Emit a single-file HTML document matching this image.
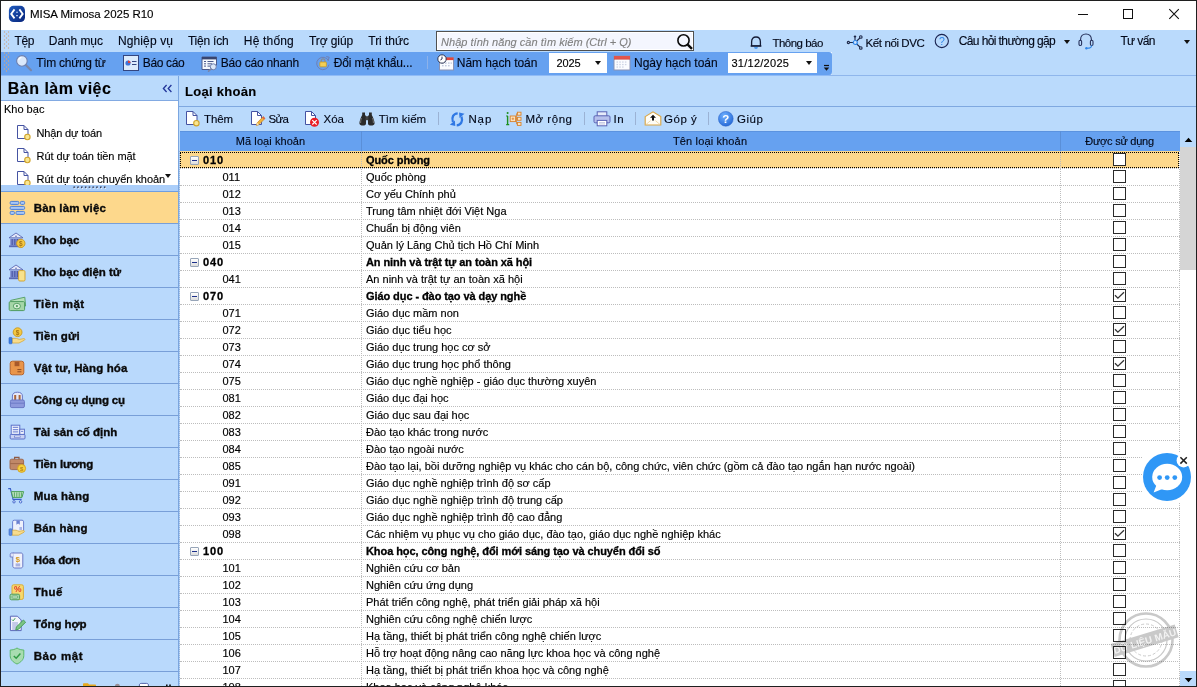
<!DOCTYPE html>
<html lang="vi">
<head>
<meta charset="utf-8">
<title>MISA Mimosa 2025 R10</title>
<style>
*{box-sizing:border-box;margin:0;padding:0}
html,body{width:1197px;height:687px;overflow:hidden;background:#fff}
body{font-family:"Liberation Sans",sans-serif;font-size:11px;color:#000;position:relative}
#win{position:absolute;left:0;top:0;width:1197px;height:687px;overflow:hidden;background:#fff}
#win>div,#win>span,#win>svg{position:absolute}
.t{white-space:nowrap;line-height:1;z-index:5;-webkit-text-stroke:0.13px currentColor}
.bd{background:#1f1f1f;z-index:50}
/* bars */
#menu{left:1px;top:30px;width:1195px;height:22px;background:#badafc}
#search{left:436px;top:31px;width:258px;height:20px;background:#f4f6fe;border:1px solid #505050;box-shadow:inset 1px 1px 0 #fff,inset -1px -1px 0 #fff}
#tb{left:1px;top:52px;width:831px;height:24px;background:#66a1f0;border-bottom:1px solid #90bbf6;border-radius:0 3px 4px 0}
#tbr{left:832px;top:52px;width:364px;height:24px;background:#badafc;z-index:-0}
.combo{top:53px;height:20px;background:#fff}
.sep{width:1px;background:#8fb2e0}
/* left panel */
#left{left:1px;top:76px;width:178px;height:610px;background:#badafc}
#lw{left:1px;top:100px;width:177px;height:85px;background:#fff;border-top:1px solid #82aae2}
#split{left:1px;top:185px;width:177px;height:6px;background:#abcef9;z-index:6}
.nav{left:1px;width:177px;height:32px;background:#b9d9fc;border-top:1px solid #789fd8}
.nav.on{background:#fdd88c;border-top:1px solid #6f9ee0}
#lsep{left:178px;top:76px;width:2px;height:610px;background:#badafc;border-left:1px solid #7ba6e0}
/* right panel */
#right{left:180px;top:76px;width:1016px;height:610px;background:#badafc}
#gline{left:179px;top:106px;width:1017px;height:1px;background:#7fa8e0}
#tline{left:1px;top:75px;width:1195px;height:1px;background:#8fb6ec}
#grid{left:180px;top:131px;width:1000px;height:555px;background:#fff}
#gh{left:180px;top:131px;width:1000px;height:20px;background:#66a1f0;border-top:1px solid #5b93e0}
.hsep{top:131px;width:1px;height:20px;background:#5a8fd8}
.r{left:180px;width:1000px;height:17px;border-bottom:1px dotted #bdbdbd;font-size:11px;white-space:nowrap;line-height:1}
.r{-webkit-text-stroke:0.15px #000}
.r.p{font-weight:bold;letter-spacing:-0.08px;-webkit-text-stroke:0.3px #000}
.r.sel{background:#fdd88c;background-clip:padding-box;height:18px;border-bottom:1px dotted #bdbdbd;width:999px}
.r.sel:after{content:"";position:absolute;box-sizing:border-box;left:0;top:1px;width:999px;height:16px;border:1px dotted #000}
.r span,.r i,.r b{position:absolute}
.r .c1{left:42.5px;top:3px}
.r.p .c1{left:23px;letter-spacing:0.9px}
.r .c2{left:186px;top:3px}
.r.sel .c1,.r.sel .c2{top:4px}
.r .ex{left:10px;top:4px;width:9px;height:9px;border:1px solid #97a5b8;background:linear-gradient(#fff,#dcdcdc);border-radius:1px}
.r.sel .ex{top:5px}
.r .ex:after{content:"";position:absolute;left:1px;top:3px;width:5px;height:1px;background:#1c2f8a}
.ck{left:933px;top:1px;width:13px;height:13px;border:1px solid #2a2a2a;background:#fff}
.r.sel .ck{top:2px}
.ck svg{position:absolute;left:0;top:0}
.vl{top:151px;width:0;height:535px;border-left:1px dotted #bdbdbd;z-index:3}
/* scrollbar */
#sb{left:1180px;top:131px;width:16px;height:555px;background:#fff}
#sbu{left:1180px;top:131px;width:16px;height:16px;background:#badafc}
#sbt{left:1180px;top:147px;width:16px;height:123px;background:#d5d5d5}
#sbd{left:1180px;top:671px;width:16px;height:15px;background:#badafc}
.arr{width:0;height:0;border-left:4px solid transparent;border-right:4px solid transparent}
</style>
</head>
<body>
<div id="win">
<div id="menu"></div>
<div id="tbr"></div>
<div id="tline"></div>
<div id="tb"></div>
<div id="search"></div>
<div class="combo" style="left:549px;width:58px"></div>
<div class="combo" style="left:728px;width:89px"></div>
<div id="left"></div>
<div id="lw"></div>
<div id="split"></div>
<div class="nav on" style="top:191px"></div>
<div class="nav" style="top:223px"></div>
<div class="nav" style="top:255px"></div>
<div class="nav" style="top:287px"></div>
<div class="nav" style="top:319px"></div>
<div class="nav" style="top:351px"></div>
<div class="nav" style="top:383px"></div>
<div class="nav" style="top:415px"></div>
<div class="nav" style="top:447px"></div>
<div class="nav" style="top:479px"></div>
<div class="nav" style="top:511px"></div>
<div class="nav" style="top:543px"></div>
<div class="nav" style="top:575px"></div>
<div class="nav" style="top:607px"></div>
<div class="nav" style="top:639px"></div>
<div style="left:1px;top:671px;width:177px;height:1px;background:#789fd8"></div>
<div id="right"></div>
<div id="lsep"></div>
<div id="gline"></div>
<div id="grid"></div>
<div id="gh"></div>
<div class="hsep" style="left:361px"></div>
<div class="hsep" style="left:1060px"></div>
<div class="r p sel" style="top:151px"><i class="ex"></i><span class="c1">010</span><span class="c2">Quốc phòng</span><b class="ck"></b></div>
<div class="r" style="top:169px"><span class="c1">011</span><span class="c2">Quốc phòng</span><b class="ck"></b></div>
<div class="r" style="top:186px"><span class="c1">012</span><span class="c2">Cơ yếu Chính phủ</span><b class="ck"></b></div>
<div class="r" style="top:203px"><span class="c1">013</span><span class="c2">Trung tâm nhiệt đới Việt Nga</span><b class="ck"></b></div>
<div class="r" style="top:220px"><span class="c1">014</span><span class="c2">Chuẩn bị động viên</span><b class="ck"></b></div>
<div class="r" style="top:237px"><span class="c1">015</span><span class="c2">Quản lý Lăng Chủ tịch Hồ Chí Minh</span><b class="ck"></b></div>
<div class="r p" style="top:254px"><i class="ex"></i><span class="c1">040</span><span class="c2">An ninh và trật tự an toàn xã hội</span><b class="ck"></b></div>
<div class="r" style="top:271px"><span class="c1">041</span><span class="c2">An ninh và trật tự an toàn xã hội</span><b class="ck"></b></div>
<div class="r p" style="top:288px"><i class="ex"></i><span class="c1">070</span><span class="c2">Giáo dục - đào tạo và dạy nghề</span><b class="ck"><svg viewBox="0 0 11 11" width="11" height="11"><path d="M1 5.3 L3.9 8.2 L10 2.3" fill="none" stroke="#333" stroke-width="1.3"/></svg></b></div>
<div class="r" style="top:305px"><span class="c1">071</span><span class="c2">Giáo dục mầm non</span><b class="ck"></b></div>
<div class="r" style="top:322px"><span class="c1">072</span><span class="c2">Giáo dục tiểu học</span><b class="ck"><svg viewBox="0 0 11 11" width="11" height="11"><path d="M1 5.3 L3.9 8.2 L10 2.3" fill="none" stroke="#333" stroke-width="1.3"/></svg></b></div>
<div class="r" style="top:339px"><span class="c1">073</span><span class="c2">Giáo dục trung học cơ sở</span><b class="ck"></b></div>
<div class="r" style="top:356px"><span class="c1">074</span><span class="c2">Giáo dục trung học phổ thông</span><b class="ck"><svg viewBox="0 0 11 11" width="11" height="11"><path d="M1 5.3 L3.9 8.2 L10 2.3" fill="none" stroke="#333" stroke-width="1.3"/></svg></b></div>
<div class="r" style="top:373px"><span class="c1">075</span><span class="c2">Giáo dục nghề nghiệp - giáo dục thường xuyên</span><b class="ck"></b></div>
<div class="r" style="top:390px"><span class="c1">081</span><span class="c2">Giáo dục đại học</span><b class="ck"></b></div>
<div class="r" style="top:407px"><span class="c1">082</span><span class="c2">Giáo dục sau đại học</span><b class="ck"></b></div>
<div class="r" style="top:424px"><span class="c1">083</span><span class="c2">Đào tạo khác trong nước</span><b class="ck"></b></div>
<div class="r" style="top:441px"><span class="c1">084</span><span class="c2">Đào tạo ngoài nước</span><b class="ck"></b></div>
<div class="r" style="top:458px"><span class="c1">085</span><span class="c2">Đào tạo lại, bồi dưỡng nghiệp vụ khác cho cán bộ, công chức, viên chức (gồm cả đào tạo ngắn hạn nước ngoài)</span><b class="ck"></b></div>
<div class="r" style="top:475px"><span class="c1">091</span><span class="c2">Giáo dục nghề nghiệp trình độ sơ cấp</span><b class="ck"></b></div>
<div class="r" style="top:492px"><span class="c1">092</span><span class="c2">Giáo dục nghề nghiệp trình độ trung cấp</span><b class="ck"></b></div>
<div class="r" style="top:509px"><span class="c1">093</span><span class="c2">Giáo dục nghề nghiệp trình độ cao đẳng</span><b class="ck"></b></div>
<div class="r" style="top:526px"><span class="c1">098</span><span class="c2">Các nhiệm vụ phục vụ cho giáo dục, đào tạo, giáo dục nghề nghiệp khác</span><b class="ck"><svg viewBox="0 0 11 11" width="11" height="11"><path d="M1 5.3 L3.9 8.2 L10 2.3" fill="none" stroke="#333" stroke-width="1.3"/></svg></b></div>
<div class="r p" style="top:543px"><i class="ex"></i><span class="c1">100</span><span class="c2">Khoa học, công nghệ, đổi mới sáng tạo và chuyển đổi số</span><b class="ck"></b></div>
<div class="r" style="top:560px"><span class="c1">101</span><span class="c2">Nghiên cứu cơ bản</span><b class="ck"></b></div>
<div class="r" style="top:577px"><span class="c1">102</span><span class="c2">Nghiên cứu ứng dụng</span><b class="ck"></b></div>
<div class="r" style="top:594px"><span class="c1">103</span><span class="c2">Phát triển công nghệ, phát triển giải pháp xã hội</span><b class="ck"></b></div>
<div class="r" style="top:611px"><span class="c1">104</span><span class="c2">Nghiên cứu công nghệ chiến lược</span><b class="ck"></b></div>
<div class="r" style="top:628px"><span class="c1">105</span><span class="c2">Hạ tầng, thiết bị phát triển công nghệ chiến lược</span><b class="ck"></b></div>
<div class="r" style="top:645px"><span class="c1">106</span><span class="c2">Hỗ trợ hoạt động nâng cao năng lực khoa học và công nghệ</span><b class="ck"></b></div>
<div class="r" style="top:662px"><span class="c1">107</span><span class="c2">Hạ tầng, thiết bị phát triển khoa học và công nghệ</span><b class="ck"></b></div>
<div class="r" style="top:679px"><span class="c1">108</span><span class="c2">Khoa học và công nghệ khác</span><b class="ck"></b></div>
<div class="vl" style="left:361px"></div>
<div class="vl" style="left:1060px"></div>
<div class="vl" style="left:1179px"></div>
<div class="vl" style="left:179px;border-left-color:#9db4d6"></div>
<div id="sb"></div><div id="sbu"></div><div id="sbt"></div><div id="sbd"></div>
<svg style="left:1184px;top:137px" width="9" height="6" viewBox="0 0 9 6"><path d="M0.7 5 L4.5 0.7 L8.3 5 Z" fill="#000"/></svg>
<svg style="left:1184px;top:677px" width="9" height="6" viewBox="0 0 9 6"><path d="M0.7 1 L4.5 5.3 L8.3 1 Z" fill="#000"/></svg>
<span class="t" style="left:30.0px;top:9px;font-size:11.5px;letter-spacing:-0.027px;color:#000">MISA Mimosa 2025 R10</span>
<span class="t" style="left:14.4px;top:35px;font-size:12px;letter-spacing:-0.344px;color:#020818">Tệp</span>
<span class="t" style="left:48.8px;top:35px;font-size:12px;letter-spacing:-0.086px;color:#020818">Danh mục</span>
<span class="t" style="left:117.9px;top:35px;font-size:12px;letter-spacing:0.132px;color:#020818">Nghiệp vụ</span>
<span class="t" style="left:187.9px;top:35px;font-size:12px;letter-spacing:-0.221px;color:#020818">Tiện ích</span>
<span class="t" style="left:243.8px;top:35px;font-size:12px;letter-spacing:0.185px;color:#020818">Hệ thống</span>
<span class="t" style="left:308.9px;top:35px;font-size:12px;letter-spacing:-0.069px;color:#020818">Trợ giúp</span>
<span class="t" style="left:368.3px;top:35px;font-size:12px;letter-spacing:-0.046px;color:#020818">Tri thức</span>
<span class="t" style="left:441.0px;top:37px;font-size:11px;letter-spacing:0.035px;color:#808080;font-style:italic">Nhập tính năng cần tìm kiếm (Ctrl + Q)</span>
<span class="t" style="left:772.5px;top:38px;font-size:11.5px;letter-spacing:-0.525px;color:#020818">Thông báo</span>
<span class="t" style="left:865.6px;top:38px;font-size:11.5px;letter-spacing:-0.408px;color:#020818">Kết nối DVC</span>
<span class="t" style="left:958.7px;top:35px;font-size:12px;letter-spacing:-0.600px;color:#020818">Câu hỏi thường gặp</span>
<span class="t" style="left:1120.4px;top:35px;font-size:12px;letter-spacing:-0.600px;color:#020818">Tư vấn</span>
<span class="t" style="left:36.2px;top:57px;font-size:12px;letter-spacing:-0.277px;color:#020818">Tìm chứng từ</span>
<span class="t" style="left:142.8px;top:57px;font-size:12px;letter-spacing:-0.341px;color:#020818">Báo cáo</span>
<span class="t" style="left:220.7px;top:57px;font-size:12px;letter-spacing:-0.179px;color:#020818">Báo cáo nhanh</span>
<span class="t" style="left:333.7px;top:57px;font-size:12px;letter-spacing:-0.129px;color:#020818">Đổi mật khẩu...</span>
<span class="t" style="left:456.8px;top:57px;font-size:12px;letter-spacing:-0.066px;color:#020818">Năm hạch toán</span>
<span class="t" style="left:556.4px;top:58px;font-size:11px;letter-spacing:-0.095px;color:#000">2025</span>
<span class="t" style="left:634.0px;top:57px;font-size:12px;letter-spacing:-0.036px;color:#020818">Ngày hạch toán</span>
<span class="t" style="left:731.4px;top:58px;font-size:11px;letter-spacing:0.271px;color:#000">31/12/2025</span>
<span class="t" style="left:7.8px;top:81px;font-size:16px;letter-spacing:0.479px;color:#000;font-weight:bold">Bàn làm việc</span>
<span class="t" style="left:3.9px;top:104px;font-size:11px;letter-spacing:0.021px;color:#000">Kho bạc</span>
<span class="t" style="left:36.5px;top:128px;font-size:11px;letter-spacing:-0.147px;color:#000">Nhận dự toán</span>
<span class="t" style="left:36.5px;top:151px;font-size:11px;letter-spacing:-0.064px;color:#000">Rút dự toán tiền mặt</span>
<span class="t" style="left:36.5px;top:174px;font-size:11px;letter-spacing:-0.043px;color:#000">Rút dự toán chuyển khoản</span>
<span class="t" style="left:184.9px;top:85px;font-size:13px;letter-spacing:0.308px;color:#000;font-weight:bold">Loại khoản</span>
<span class="t" style="left:204.0px;top:114px;font-size:11.5px;letter-spacing:-0.069px;color:#020818">Thêm</span>
<span class="t" style="left:268.4px;top:114px;font-size:11.5px;letter-spacing:-0.600px;color:#020818">Sửa</span>
<span class="t" style="left:323.4px;top:114px;font-size:11.5px;letter-spacing:0.066px;color:#020818">Xóa</span>
<span class="t" style="left:378.7px;top:114px;font-size:11.5px;letter-spacing:0.031px;color:#020818">Tìm kiếm</span>
<span class="t" style="left:468.4px;top:114px;font-size:11.5px;letter-spacing:0.900px;color:#020818">Nạp</span>
<span class="t" style="left:525.4px;top:114px;font-size:11.5px;letter-spacing:0.543px;color:#020818">Mở rộng</span>
<span class="t" style="left:613.4px;top:114px;font-size:11.5px;letter-spacing:0.606px;color:#020818">In</span>
<span class="t" style="left:664.0px;top:114px;font-size:11.5px;letter-spacing:0.528px;color:#020818">Góp ý</span>
<span class="t" style="left:737.1px;top:114px;font-size:11.5px;letter-spacing:0.501px;color:#020818">Giúp</span>
<span class="t" style="left:235.8px;top:136px;font-size:11px;letter-spacing:0.075px;color:#020818">Mã loại khoản</span>
<span class="t" style="left:673.0px;top:136px;font-size:11px;letter-spacing:0.141px;color:#020818">Tên loại khoản</span>
<span class="t" style="left:1085.3px;top:136px;font-size:11px;letter-spacing:-0.243px;color:#020818">Được sử dụng</span>
<span class="t" style="left:33.7px;top:203px;font-size:11.5px;letter-spacing:0.170px;color:#0a0a0a;font-weight:bold;-webkit-text-stroke:0.35px #0a0a0a">Bàn làm việc</span>
<span class="t" style="left:33.7px;top:235px;font-size:11.5px;letter-spacing:0.071px;color:#0a0a0a;font-weight:bold;-webkit-text-stroke:0.35px #0a0a0a">Kho bạc</span>
<span class="t" style="left:33.7px;top:267px;font-size:11.5px;letter-spacing:-0.004px;color:#0a0a0a;font-weight:bold;-webkit-text-stroke:0.35px #0a0a0a">Kho bạc điện tử</span>
<span class="t" style="left:33.7px;top:299px;font-size:11.5px;letter-spacing:0.489px;color:#0a0a0a;font-weight:bold;-webkit-text-stroke:0.35px #0a0a0a">Tiền mặt</span>
<span class="t" style="left:33.7px;top:331px;font-size:11.5px;letter-spacing:0.102px;color:#0a0a0a;font-weight:bold;-webkit-text-stroke:0.35px #0a0a0a">Tiền gửi</span>
<span class="t" style="left:33.7px;top:363px;font-size:11.5px;letter-spacing:0.105px;color:#0a0a0a;font-weight:bold;-webkit-text-stroke:0.35px #0a0a0a">Vật tư, Hàng hóa</span>
<span class="t" style="left:33.7px;top:395px;font-size:11.5px;letter-spacing:-0.186px;color:#0a0a0a;font-weight:bold;-webkit-text-stroke:0.35px #0a0a0a">Công cụ dụng cụ</span>
<span class="t" style="left:33.7px;top:427px;font-size:11.5px;letter-spacing:-0.008px;color:#0a0a0a;font-weight:bold;-webkit-text-stroke:0.35px #0a0a0a">Tài sản cố định</span>
<span class="t" style="left:33.7px;top:459px;font-size:11.5px;letter-spacing:-0.086px;color:#0a0a0a;font-weight:bold;-webkit-text-stroke:0.35px #0a0a0a">Tiền lương</span>
<span class="t" style="left:33.7px;top:491px;font-size:11.5px;letter-spacing:0.275px;color:#0a0a0a;font-weight:bold;-webkit-text-stroke:0.35px #0a0a0a">Mua hàng</span>
<span class="t" style="left:33.7px;top:523px;font-size:11.5px;letter-spacing:0.216px;color:#0a0a0a;font-weight:bold;-webkit-text-stroke:0.35px #0a0a0a">Bán hàng</span>
<span class="t" style="left:33.7px;top:555px;font-size:11.5px;letter-spacing:-0.109px;color:#0a0a0a;font-weight:bold;-webkit-text-stroke:0.35px #0a0a0a">Hóa đơn</span>
<span class="t" style="left:33.7px;top:587px;font-size:11.5px;letter-spacing:0.405px;color:#0a0a0a;font-weight:bold;-webkit-text-stroke:0.35px #0a0a0a">Thuế</span>
<span class="t" style="left:33.7px;top:619px;font-size:11.5px;letter-spacing:-0.090px;color:#0a0a0a;font-weight:bold;-webkit-text-stroke:0.35px #0a0a0a">Tổng hợp</span>
<span class="t" style="left:33.7px;top:651px;font-size:11.5px;letter-spacing:0.588px;color:#0a0a0a;font-weight:bold;-webkit-text-stroke:0.35px #0a0a0a">Bảo mật</span>
<!-- title icon -->
<svg style="left:8px;top:5px" width="18" height="18" viewBox="0 0 18 18"><defs><linearGradient id="tg" x1="0" y1="0" x2="1" y2="1"><stop offset="0" stop-color="#1f5cc0"/><stop offset="1" stop-color="#08247a"/></linearGradient></defs><rect x="0.9" y="0.8" width="16.1" height="16.3" rx="4.6" fill="url(#tg)"/><path d="M6.5 4.4 L3.2 8.9 L6.5 13.4 M11.4 4.4 L14.7 8.9 L11.4 13.4" fill="none" stroke="#fff" stroke-width="1.8" stroke-linejoin="miter"/><path d="M8.2 7.3 H9.8 M8.2 10.6 H9.8" stroke="#cfe0ff" stroke-width="1.1"/></svg>
<!-- window controls -->
<svg style="left:1070px;top:4px" width="120" height="22" viewBox="0 0 120 22"><path d="M8 10.5 H18" stroke="#111" stroke-width="1"/><rect x="53.5" y="5.5" width="9" height="9" fill="none" stroke="#111" stroke-width="1"/><path d="M99.3 5.2 L108.8 14.8 M108.8 5.2 L99.3 14.8" stroke="#111" stroke-width="1.1"/></svg>
<!-- grips -->
<svg style="left:3px;top:30px" width="8" height="42" viewBox="0 0 8 42"><g fill="#c9a98c"><circle cx="1.5" cy="2" r=".7"/><circle cx="5.5" cy="2" r=".7"/><circle cx="3.5" cy="4" r=".7"/><circle cx="1.5" cy="6" r=".7"/><circle cx="5.5" cy="6" r=".7"/><circle cx="3.5" cy="8" r=".7"/><circle cx="1.5" cy="10" r=".7"/><circle cx="5.5" cy="10" r=".7"/><circle cx="3.5" cy="12" r=".7"/><circle cx="1.5" cy="14" r=".7"/><circle cx="5.5" cy="14" r=".7"/><circle cx="3.5" cy="16" r=".7"/><circle cx="1.5" cy="18" r=".7"/><circle cx="5.5" cy="18" r=".7"/></g><g fill="#d2a77e"><circle cx="1.5" cy="23" r=".7"/><circle cx="5.5" cy="23" r=".7"/><circle cx="3.5" cy="25" r=".7"/><circle cx="1.5" cy="27" r=".7"/><circle cx="5.5" cy="27" r=".7"/><circle cx="3.5" cy="29" r=".7"/><circle cx="1.5" cy="31" r=".7"/><circle cx="5.5" cy="31" r=".7"/><circle cx="3.5" cy="33" r=".7"/><circle cx="1.5" cy="35" r=".7"/><circle cx="5.5" cy="35" r=".7"/><circle cx="3.5" cy="37" r=".7"/><circle cx="1.5" cy="39" r=".7"/><circle cx="5.5" cy="39" r=".7"/><circle cx="3.5" cy="41" r=".7"/></g></svg>
<!-- search magnifier -->
<svg style="left:676px;top:32px" width="18" height="18" viewBox="0 0 18 18"><circle cx="7.5" cy="8.4" r="5.6" fill="none" stroke="#0a0a0a" stroke-width="1.6"/><path d="M11.7 12.6 L16 16.9" stroke="#0a0a0a" stroke-width="2.4" stroke-linecap="butt"/></svg>
<!-- bell -->
<svg style="left:749px;top:34px" width="14" height="16" viewBox="0 0 14 16"><path d="M2.6 11.9 V8 C2.6 4.6 4.4 3 7 3 C9.6 3 11.4 4.6 11.4 8 V11.9 Z" fill="none" stroke="#151c36" stroke-width="1.3"/><path d="M1.6 12 H12.4" stroke="#151c36" stroke-width="1.3"/><path d="M5.6 13.2 C6 14.4 8 14.4 8.4 13.2" fill="none" stroke="#2f86e8" stroke-width="1.2"/></svg>
<!-- share -->
<svg style="left:846px;top:33px" width="18" height="18" viewBox="0 0 18 18"><g fill="none" stroke="#1d2748" stroke-width="1.1"><path d="M3.4 9.5 H7.4 M9 7.6 V4.4 M10.6 8.2 L13.9 5 M10.6 10.8 L13.9 14"/><circle cx="2.4" cy="9.5" r="1.1"/><circle cx="14.8" cy="4" r="1.3"/><circle cx="14.8" cy="15" r="1.3"/></g><circle cx="9" cy="3.6" r="1.2" fill="#1d2748"/><circle cx="9.3" cy="9.5" r="2" fill="#cfe3fc" stroke="#2f86e8" stroke-width="1.2"/></svg>
<!-- question circle -->
<svg style="left:934px;top:33px" width="16" height="16" viewBox="0 0 16 16"><circle cx="7.8" cy="8" r="6.6" fill="none" stroke="#1a2350" stroke-width="1.1"/><text x="7.8" y="11.6" font-family="Liberation Sans, sans-serif" font-size="10.5" text-anchor="middle" fill="#2f86e8">?</text></svg>
<!-- dropdown arrows -->
<div class="arr" style="left:1064px;top:40px;border-left-width:3.5px;border-right-width:3.5px;border-top:4px solid #111"></div>
<div class="arr" style="left:1184px;top:40px;border-left-width:3.5px;border-right-width:3.5px;border-top:4px solid #111"></div>
<!-- headset -->
<svg style="left:1077px;top:32px" width="18" height="18" viewBox="0 0 18 18"><g fill="none" stroke="#27325c" stroke-width="1.1"><path d="M3.6 9 V7.4 C3.6 4 5.8 2 9 2 C12.2 2 14.4 4 14.4 7.4 V9"/><rect x="2" y="8.3" width="2.6" height="5.2" rx="1.2"/><rect x="13.4" y="8.3" width="2.6" height="5.2" rx="1.2"/></g><path d="M14.6 13.5 C14.6 15.6 12.5 16.3 10 16.3" fill="none" stroke="#2f86e8" stroke-width="1.1"/><circle cx="9.4" cy="16.2" r="1.2" fill="#2f86e8"/></svg>
<!-- toolbar: magnifier -->
<svg style="left:15px;top:54px" width="18" height="18" viewBox="0 0 18 18"><path d="M10.6 10.8 L16 16.2" stroke="#7a86a8" stroke-width="2.2" stroke-linecap="round"/><circle cx="6.9" cy="6.9" r="5.3" fill="#dbe9fb" stroke="#6d7fae" stroke-width="1.1"/><path d="M3.6 6.2 A3.6 3.6 0 0 1 6.4 3.4" fill="none" stroke="#fff" stroke-width="1.2"/></svg>
<!-- toolbar: report -->
<svg style="left:123px;top:55px" width="16" height="16" viewBox="0 0 16 16"><rect x="0.5" y="0.5" width="15" height="15" fill="#dcebfc" stroke="#33457f" stroke-width="1"/><circle cx="5" cy="8" r="2.6" fill="#3f74d8"/><path d="M5 8 V5.4 A2.6 2.6 0 0 1 7.6 8 Z" fill="#e0403a"/><path d="M9 6.5 H13.5 M9 9.5 H13.5" stroke="#33457f" stroke-width="1.1"/></svg>
<!-- toolbar: quick report -->
<svg style="left:201px;top:56px" width="17" height="16" viewBox="0 0 17 16"><path d="M1 1 H15.5 V9 L12 13.5 H1 Z" fill="#f4f8fe" stroke="#4b5a8c" stroke-width="1"/><rect x="1" y="1" width="14.5" height="2.4" fill="#39456e"/><path d="M3 5.5 H5 M6.5 5.5 H12.5 M3 7.8 H5 M6.5 7.8 H11 M3 10.1 H5 M6.5 10.1 H9" stroke="#4b5a8c" stroke-width="1"/><circle cx="12.3" cy="10.8" r="3" fill="#dbe7f8" stroke="#6d7fae" stroke-width="1"/><path d="M10 13 L7.6 15.2" stroke="#7a86a8" stroke-width="1.6" stroke-linecap="round"/></svg>
<!-- toolbar: change password -->
<svg style="left:315px;top:55px" width="16" height="16" viewBox="0 0 16 16"><path d="M13.6 6 A6.2 6.2 0 1 0 14 9.6" fill="none" stroke="#6f80b4" stroke-width="1"/><path d="M11.2 1.6 L14.2 2.2 L13.2 5.2" fill="none" stroke="#6f80b4" stroke-width="1"/><path d="M6.2 7.2 V5.8 A1.9 1.9 0 0 1 10 5.8 V7.2" fill="none" stroke="#8c8c8c" stroke-width="1.1"/><rect x="4.8" y="7" width="6.6" height="4.8" rx="0.8" fill="#f3cf55" stroke="#c99a22" stroke-width="0.8"/></svg>
<div class="sep" style="left:427px;top:56px;height:13px;background:#8db2ea"></div>
<!-- toolbar: calendar with clock -->
<svg style="left:437px;top:54px" width="17" height="17" viewBox="0 0 17 17"><rect x="2.5" y="3.5" width="14" height="12.5" fill="#fbfcff" stroke="#8a93b4" stroke-width="1"/><rect x="2.5" y="3.5" width="14" height="2.6" fill="#e2453c"/><g fill="#c3cadd"><rect x="5" y="8.4" width="1.6" height="1.4"/><rect x="8" y="8.4" width="1.6" height="1.4"/><rect x="11" y="8.4" width="1.6" height="1.4"/><rect x="5" y="11" width="1.6" height="1.4"/><rect x="8" y="11" width="1.6" height="1.4"/><rect x="11" y="11" width="1.6" height="1.4"/><rect x="13.6" y="8.4" width="1.4" height="1.4"/></g><circle cx="5" cy="5" r="4.2" fill="#fff" stroke="#2a3354" stroke-width="1"/><path d="M5 2.6 V5 L3.4 6" fill="none" stroke="#2a3354" stroke-width="1"/></svg>
<div class="arr" style="left:595px;top:61px;border-left-width:3.5px;border-right-width:3.5px;border-top:4px solid #111"></div>
<!-- toolbar: calendar -->
<svg style="left:613px;top:55px" width="18" height="16" viewBox="0 0 18 16"><rect x="1" y="1" width="16" height="14" fill="#fbfcff" stroke="#8a93b4" stroke-width="1"/><rect x="1" y="1" width="16" height="3" fill="#e2554c"/><path d="M1 4.4 H17" stroke="#c23a34" stroke-width="0.6"/><g fill="#cdd3e4"><rect x="3.5" y="6.4" width="1.5" height="1.3"/><rect x="6.3" y="6.4" width="1.5" height="1.3"/><rect x="9.1" y="6.4" width="1.5" height="1.3"/><rect x="11.9" y="6.4" width="1.5" height="1.3"/><rect x="3.5" y="8.9" width="1.5" height="1.3"/><rect x="6.3" y="8.9" width="1.5" height="1.3"/><rect x="9.1" y="8.9" width="1.5" height="1.3"/><rect x="11.9" y="8.9" width="1.5" height="1.3"/><rect x="3.5" y="11.4" width="1.5" height="1.3"/><rect x="6.3" y="11.4" width="1.5" height="1.3"/><rect x="9.1" y="11.4" width="1.5" height="1.3"/></g></svg>
<div class="arr" style="left:805.5px;top:61px;border-left-width:3.5px;border-right-width:3.5px;border-top:4px solid #111"></div>
<!-- overflow -->
<svg style="left:823px;top:64px" width="7" height="8" viewBox="0 0 7 8"><path d="M1 1.5 H6" stroke="#111" stroke-width="1.2"/><path d="M0.8 3.6 H6.2 L3.5 6.8 Z" fill="#111"/></svg>
<!-- left: chevron -->
<svg style="left:162px;top:84px" width="11" height="9" viewBox="0 0 11 9"><path d="M4.6 1 L1.4 4.5 L4.6 8 M9.4 1 L6.2 4.5 L9.4 8" fill="none" stroke="#22359a" stroke-width="1.3"/></svg>
<!-- left: doc icons -->
<svg style="left:16px;top:124px" width="16" height="17" viewBox="0 0 16 17" id="doc1"><path d="M1.5 1.5 H8 L12 5.5 V14.5 H1.5 Z" fill="#fff" stroke="#4553a2" stroke-width="1"/><path d="M8 1.5 V5.5 H12" fill="none" stroke="#4553a2" stroke-width="1"/><circle cx="11.4" cy="13" r="2.7" fill="#f9e690" stroke="#d0a32a" stroke-width="1.1"/></svg>
<svg style="left:16px;top:147px" width="16" height="17" viewBox="0 0 16 17"><path d="M1.5 1.5 H8 L12 5.5 V14.5 H1.5 Z" fill="#fff" stroke="#4553a2" stroke-width="1"/><path d="M8 1.5 V5.5 H12" fill="none" stroke="#4553a2" stroke-width="1"/><circle cx="11.4" cy="13" r="2.7" fill="#f9e690" stroke="#d0a32a" stroke-width="1.1"/></svg>
<svg style="left:16px;top:170px" width="16" height="15" viewBox="0 0 16 15"><path d="M1.5 1.5 H8 L12 5.5 V14.5 H1.5 Z" fill="#fff" stroke="#4553a2" stroke-width="1"/><path d="M8 1.5 V5.5 H12" fill="none" stroke="#4553a2" stroke-width="1"/><circle cx="11.4" cy="13" r="2.7" fill="#f9e690" stroke="#d0a32a" stroke-width="1.1"/></svg>
<div class="arr" style="left:165px;top:174px;border-left-width:3.5px;border-right-width:3.5px;border-top:4px solid #111"></div>
<!-- splitter dots -->
<svg style="left:73px;top:186px;z-index:7" width="36" height="4" viewBox="0 0 36 4"><g fill="#1f2a4a"><rect x="0.5" y="0.5" width="1.6" height="1.6"/><rect x="4.3" y="0.5" width="1.6" height="1.6"/><rect x="8.1" y="0.5" width="1.6" height="1.6"/><rect x="11.9" y="0.5" width="1.6" height="1.6"/><rect x="15.7" y="0.5" width="1.6" height="1.6"/><rect x="19.5" y="0.5" width="1.6" height="1.6"/><rect x="23.3" y="0.5" width="1.6" height="1.6"/><rect x="27.1" y="0.5" width="1.6" height="1.6"/><rect x="30.9" y="0.5" width="1.6" height="1.6"/></g><g fill="#fff"><rect x="1.3" y="1.6" width="1.2" height="1.2"/><rect x="5.1" y="1.6" width="1.2" height="1.2"/><rect x="8.9" y="1.6" width="1.2" height="1.2"/><rect x="12.7" y="1.6" width="1.2" height="1.2"/><rect x="16.5" y="1.6" width="1.2" height="1.2"/><rect x="20.3" y="1.6" width="1.2" height="1.2"/><rect x="24.1" y="1.6" width="1.2" height="1.2"/><rect x="27.9" y="1.6" width="1.2" height="1.2"/><rect x="31.7" y="1.6" width="1.2" height="1.2"/></g></svg>
<!-- grid toolbar: add -->
<svg style="left:185px;top:110px" width="16" height="17" viewBox="0 0 16 17"><path d="M1.5 1.5 H8 L12 5.5 V14.5 H1.5 Z" fill="#fff" stroke="#4553a2" stroke-width="1"/><path d="M8 1.5 V5.5 H12" fill="none" stroke="#4553a2" stroke-width="1"/><circle cx="11.4" cy="13.2" r="2.7" fill="#f9e690" stroke="#d0a32a" stroke-width="1.1"/></svg>
<!-- edit -->
<svg style="left:250px;top:110px" width="17" height="17" viewBox="0 0 17 17"><path d="M1.5 1.5 H7.5 L11.5 5.5 V14.5 H1.5 Z" fill="#fff" stroke="#4553a2" stroke-width="1"/><path d="M7.5 1.5 V5.5 H11.5" fill="none" stroke="#4553a2" stroke-width="1"/><path d="M13.2 6.6 L15 8.4 L9 14.6 L6.4 15.6 L7.2 12.8 Z" fill="#f0b43c" stroke="#c9821e" stroke-width="0.7"/><path d="M13.2 6.6 L15 8.4 L14 9.4 L12.2 7.6 Z" fill="#e0584a"/><path d="M6.4 15.6 L7.2 12.8 L9 14.6 Z" fill="#f5e2b0"/></svg>
<!-- delete -->
<svg style="left:304px;top:110px" width="17" height="17" viewBox="0 0 17 17"><path d="M1.5 1.5 H7.5 L11.5 5.5 V14.5 H1.5 Z" fill="#fff" stroke="#4553a2" stroke-width="1"/><path d="M7.5 1.5 V5.5 H11.5" fill="none" stroke="#4553a2" stroke-width="1"/><circle cx="10.5" cy="12.3" r="4.5" fill="#ea1c24"/><path d="M8.3 10.1 L12.7 14.5 M12.7 10.1 L8.3 14.5" stroke="#fff" stroke-width="1.15"/></svg>
<!-- binoculars -->
<svg style="left:359px;top:112px" width="16" height="14" viewBox="0 0 16 14"><path d="M3.2 0.6 H6 V3 L7 4 V11.5 C7 13 5.8 13.6 4 13.6 C2 13.6 0.4 13 0.4 11.3 C0.4 9 1.8 5.5 3.2 3 Z" fill="#2b2b2b"/><path d="M12.8 0.6 H10 V3 L9 4 V11.5 C9 13 10.2 13.6 12 13.6 C14 13.6 15.6 13 15.6 11.3 C15.6 9 14.2 5.5 12.8 3 Z" fill="#2b2b2b"/><rect x="6.6" y="4.2" width="2.8" height="4" fill="#444"/><path d="M2.4 6 C1.8 8 1.6 9.6 1.6 11 M13.6 6 C14.2 8 14.4 9.6 14.4 11" stroke="#888" stroke-width="0.8" fill="none"/></svg>
<div class="sep" style="left:438px;top:112px;height:13px;background:#9bb2d4"></div>
<!-- refresh -->
<svg style="left:449px;top:111px" width="17" height="16" viewBox="0 0 17 16"><g id="rf"><path d="M8.7 2.3 C4.4 2.5 2.3 6.2 3.9 11" fill="none" stroke="#2f78e4" stroke-width="2.3"/><path d="M0.9 13.8 L6.3 15 L5.9 9.6 Z" fill="#2f78e4"/></g><use href="#rf" transform="rotate(180 8.2 8.3)"/></svg>
<!-- expand tree -->
<svg style="left:505px;top:111px" width="17" height="16" viewBox="0 0 17 16"><path d="M2.6 5 V13.6 M1.2 13.6 H4.2 M1.4 5 H2.6" stroke="#1c8f1c" stroke-width="1.4" fill="none"/><circle cx="2.6" cy="2" r="1" fill="#1c8f1c"/><g fill="#fbe3c0" stroke="#d9822b" stroke-width="0.9"><rect x="5.2" y="5" width="5.4" height="5.6"/><rect x="12.4" y="1.2" width="3.6" height="3"/><rect x="12.4" y="6.3" width="3.6" height="3"/><rect x="12.4" y="11.4" width="3.6" height="3"/></g><path d="M10.6 7.8 H12.4 M11.5 2.7 V12.9 M11.5 2.7 H12.4 M11.5 12.9 H12.4" stroke="#d9822b" stroke-width="0.8" fill="none"/><path d="M6.6 7.8 H9.2 M7.9 6.5 V9.1" stroke="#d9822b" stroke-width="0.8"/></svg>
<div class="sep" style="left:584px;top:112px;height:13px;background:#9bb2d4"></div>
<!-- printer -->
<svg style="left:593px;top:111px" width="18" height="16" viewBox="0 0 18 16"><rect x="4.2" y="0.8" width="9.6" height="5" fill="#e6ebfa" stroke="#5a63b4" stroke-width="1"/><rect x="1" y="4.8" width="16" height="7" rx="1.2" fill="#b6c0ec" stroke="#5a63b4" stroke-width="1"/><rect x="4.2" y="9.4" width="9.6" height="5.4" fill="#fff" stroke="#5a63b4" stroke-width="1"/><path d="M6 11.6 H12 M6 13 H12" stroke="#9aa3d0" stroke-width="0.6"/></svg>
<div class="sep" style="left:635px;top:112px;height:13px;background:#9bb2d4"></div>
<!-- feedback envelope -->
<svg style="left:644px;top:111px" width="18" height="15" viewBox="0 0 18 15"><path d="M1.2 5.6 L9 0.8 L16.8 5.6 V14 H1.2 Z" fill="#fffdf6" stroke="#d9a441" stroke-width="1.1"/><path d="M1.4 14 L6.6 9.6 M16.6 14 L11.4 9.6" stroke="#e6c98a" stroke-width="0.7"/><path d="M9 3.8 L12 6.8 H10 V9.6 H8 V6.8 H6 Z" fill="#111"/></svg>
<div class="sep" style="left:708px;top:112px;height:13px;background:#9bb2d4"></div>
<!-- help -->
<svg style="left:718px;top:111px" width="16" height="16" viewBox="0 0 16 16"><defs><radialGradient id="hg" cx="0.4" cy="0.3" r="0.8"><stop offset="0" stop-color="#6db0ff"/><stop offset="1" stop-color="#1f62d2"/></radialGradient></defs><circle cx="7.8" cy="7.8" r="7.4" fill="url(#hg)" stroke="#2a63c8" stroke-width="0.5"/><text x="7.8" y="12" font-family="Liberation Sans, sans-serif" font-size="11.5" font-weight="bold" text-anchor="middle" fill="#fff">?</text></svg>
<!-- nav 0: desk -->
<svg style="left:9px;top:200px" width="17" height="16" viewBox="0 0 17 16"><g fill="#a9c8f6" stroke="#4a7fd8" stroke-width="1"><rect x="1.2" y="1.4" width="8.6" height="3" rx="1"/><rect x="11.4" y="1.4" width="4.2" height="3" rx="1"/><rect x="1.2" y="6.4" width="14.4" height="3" rx="1"/><rect x="1.2" y="11.4" width="4.2" height="3" rx="1"/><rect x="7" y="11.4" width="8.6" height="3" rx="1"/></g></svg>
<!-- nav 1: bank + coin -->
<svg style="left:8px;top:232px" width="18" height="17" viewBox="0 0 18 17"><g id="bank"><path d="M8 1 L15 5.8 H1 Z" fill="#e8ecfb" stroke="#5a68b4" stroke-width="0.9"/><circle cx="8" cy="4.2" r="0.8" fill="#5a68b4"/><rect x="2.2" y="6.6" width="11.6" height="7" fill="#7d8bd0"/><path d="M4.2 7 V13 M6.8 7 V13 M9.4 7 V13 M12 7 V13" stroke="#4d5aa6" stroke-width="1.2"/><rect x="1" y="13.4" width="14" height="1.8" fill="#5a68b4"/></g><circle cx="12.8" cy="11.4" r="4.2" fill="#f4c842" stroke="#c9981e" stroke-width="0.9"/><text x="12.8" y="14" font-family="Liberation Sans, sans-serif" font-size="6.5" font-weight="bold" text-anchor="middle" fill="#a87414">$</text></svg>
<!-- nav 2: bank + phone -->
<svg style="left:8px;top:264px" width="18" height="18" viewBox="0 0 18 18"><use href="#bank"/><rect x="10.6" y="6.6" width="6.4" height="10.4" rx="1.2" fill="#f8e28c" stroke="#d2a534" stroke-width="1"/></svg>
<!-- nav 3: cash -->
<svg style="left:8px;top:296px" width="19" height="16" viewBox="0 0 19 16"><path d="M2.6 4.4 L16.8 1.2 L17.6 10 L3.4 11.6 Z" fill="#b6dfb8" stroke="#4f9c5f" stroke-width="0.9"/><rect x="1.2" y="5.6" width="15.4" height="9" rx="1.2" fill="#a5d6a7" stroke="#4f9c5f" stroke-width="1"/><ellipse cx="8.9" cy="10.1" rx="3.6" ry="2.8" fill="#d6eed6" stroke="#4f9c5f" stroke-width="0.9"/><circle cx="8.9" cy="10.1" r="1.1" fill="#4f9c5f"/></svg>
<!-- nav 4: hand + coin -->
<svg style="left:8px;top:327px" width="18" height="18" viewBox="0 0 18 18"><circle cx="9.6" cy="5.2" r="4.4" fill="#f4c842" stroke="#c9981e" stroke-width="0.9"/><text x="9.6" y="7.8" font-family="Liberation Sans, sans-serif" font-size="6.5" font-weight="bold" text-anchor="middle" fill="#a87414">$</text><path d="M4 11.4 H8.4 C9.6 11.4 10.2 12.4 11.4 12.4 L16 11.6 C17 11.6 17.2 12.6 16.4 13.2 L11 16 H4 Z" fill="#f7dc8c" stroke="#d6aa3c" stroke-width="0.8"/><rect x="1" y="10.4" width="3" height="6.4" rx="0.8" fill="#3c7fe4" stroke="#2a5fc0" stroke-width="0.6"/></svg>
<!-- nav 5: box -->
<svg style="left:9px;top:360px" width="16" height="16" viewBox="0 0 16 16"><rect x="1.2" y="1.2" width="13.6" height="13.6" rx="2.2" fill="#e9954a" stroke="#b9652a" stroke-width="1"/><rect x="5.6" y="1.6" width="4.8" height="4.6" fill="#a8592a"/><path d="M8.4 9.6 H12.4 M8.4 11.8 H12.4" stroke="#8c4a22" stroke-width="1"/></svg>
<!-- nav 6: toolbox -->
<svg style="left:9px;top:391px" width="17" height="18" viewBox="0 0 17 18"><path d="M3.4 9 V5 C3.4 2.4 5.4 1.2 8.4 1.2 C11.4 1.2 13.4 2.4 13.4 5 V9" fill="#e4e8fa" stroke="#6a78c4" stroke-width="1"/><rect x="5.2" y="4" width="2" height="5.4" fill="#a8653a"/><rect x="9.6" y="4" width="2" height="5.4" fill="#a8653a"/><rect x="1.4" y="9" width="14" height="7.6" rx="1.4" fill="#8d99dc" stroke="#6a78c4" stroke-width="1"/><path d="M1.6 12.2 H15.2" stroke="#6a78c4" stroke-width="0.9"/></svg>
<!-- nav 7: fixed asset -->
<svg style="left:9px;top:424px" width="17" height="16" viewBox="0 0 17 16"><rect x="2.2" y="1.2" width="8.6" height="9.4" fill="#f0f3fd" stroke="#5b70c8" stroke-width="1"/><path d="M3.8 3.4 H9.2 M3.8 5.6 H9.2 M3.8 7.8 H9.2" stroke="#7d8fd8" stroke-width="1.3"/><rect x="10.8" y="5.2" width="4.6" height="5.4" fill="#f0f3fd" stroke="#5b70c8" stroke-width="1"/><path d="M12 7.4 H14.2" stroke="#7d8fd8" stroke-width="1.2"/><rect x="1.2" y="10.4" width="14.8" height="4.6" rx="1" fill="#c9d2f4" stroke="#5b70c8" stroke-width="1"/><rect x="5.6" y="12" width="5.6" height="1.6" fill="#fff" stroke="#5b70c8" stroke-width="0.6"/></svg>
<!-- nav 8: briefcase + coin -->
<svg style="left:9px;top:455px" width="18" height="18" viewBox="0 0 18 18"><path d="M5.6 4.4 V2.4 H10 V4.4" fill="none" stroke="#8c5a44" stroke-width="1.2"/><rect x="1" y="4.2" width="13.6" height="10.4" rx="1.6" fill="#c08868" stroke="#9c6448" stroke-width="0.9"/><path d="M1.2 8.6 H14.4" stroke="#9c6448" stroke-width="0.9"/><circle cx="12.6" cy="13.4" r="4" fill="#f6d23e" stroke="#d2a01e" stroke-width="0.9"/><text x="12.6" y="15.8" font-family="Liberation Sans, sans-serif" font-size="6" font-weight="bold" text-anchor="middle" fill="#b8861a">$</text></svg>
<!-- nav 9: cart -->
<svg style="left:7px;top:487px" width="18" height="17" viewBox="0 0 18 17"><path d="M1.2 1.6 H3.4 L6 12.4 H14.6" fill="none" stroke="#3a5fc8" stroke-width="1.1"/><path d="M4.4 4.6 H16.6 L15 10.4 H5.8 Z" fill="#bfe3c2" stroke="#4ca05a" stroke-width="1"/><path d="M7.4 5.4 V9.8 M9.8 5.4 V9.8 M12.2 5.4 V9.8 M14.4 5.4 V9.8" stroke="#4ca05a" stroke-width="0.9"/><circle cx="7" cy="14.8" r="1.2" fill="#dfe6fa" stroke="#3a5fc8" stroke-width="0.9"/><circle cx="13.6" cy="14.8" r="1.2" fill="#dfe6fa" stroke="#3a5fc8" stroke-width="0.9"/></svg>
<!-- nav 10: sell -->
<svg style="left:8px;top:519px" width="18" height="18" viewBox="0 0 18 18"><rect x="4.6" y="1.2" width="11" height="11.6" rx="1.6" fill="#eef1fc" stroke="#6a80d0" stroke-width="1"/><path d="M8.4 1.4 V5.8 L10.1 4.6 L11.8 5.8 V1.4" fill="#6a80d0"/><rect x="11.4" y="8" width="2.6" height="3" fill="#aab6e8"/><path d="M4 11.2 H8 C9.2 11.2 9.8 12.2 11 12.2 L15.6 11.6 C16.6 11.6 16.8 12.6 16 13.2 L10.6 16.2 H4 Z" fill="#f7dc8c" stroke="#d6aa3c" stroke-width="0.8"/><rect x="1" y="9.8" width="3" height="6.6" rx="0.8" fill="#5b8ae0" stroke="#3a6ac8" stroke-width="0.6"/></svg>
<!-- nav 11: invoice -->
<svg style="left:9px;top:552px" width="15" height="17" viewBox="0 0 15 17"><path d="M3.8 1 H12 C13.2 1 13.8 1.8 13.8 3 V14 C13.8 15.2 13 16 11.8 16 H5.8 C4.6 16 3.8 15.2 3.8 14 Z" fill="#f0f2fc" stroke="#6a78c4" stroke-width="1"/><path d="M3.8 5 H1.2 V2.6 C1.2 1.6 1.8 1 2.6 1 H4.6" fill="#dfe4f8" stroke="#6a78c4" stroke-width="0.9"/><text x="8.8" y="9.6" font-family="Liberation Sans, sans-serif" font-size="8" font-weight="bold" text-anchor="middle" fill="#d49a1e">$</text><rect x="6.6" y="11.4" width="4.6" height="3" fill="#aab2e0"/></svg>
<!-- nav 12: tax -->
<svg style="left:9px;top:584px" width="16" height="17" viewBox="0 0 16 17"><rect x="3" y="0.8" width="11.4" height="14.6" rx="1.6" fill="#f7d86e" stroke="#d8ae3a" stroke-width="1"/><text x="8.8" y="8.4" font-family="Liberation Sans, sans-serif" font-size="8.5" font-weight="bold" text-anchor="middle" fill="#e0382e">%</text><rect x="1" y="10.2" width="9.6" height="5.6" rx="1.4" fill="#a5d6a7" stroke="#4f9c5f" stroke-width="1"/><rect x="3" y="12" width="5.6" height="2" rx="0.8" fill="#d6eed6" stroke="#4f9c5f" stroke-width="0.7"/></svg>
<!-- nav 13: summary -->
<svg style="left:9px;top:615px" width="18" height="17" viewBox="0 0 18 17"><path d="M1.4 1.2 H8.4 L12.2 5 V15.6 H1.4 Z" fill="#f3f5fd" stroke="#5b68b8" stroke-width="1"/><path d="M3 4.6 L4.2 5.8 L6.2 3.2" fill="none" stroke="#3ea04e" stroke-width="1"/><path d="M3.2 8 H9 M3.2 10 H9 M3.2 12 H7.6 M3.2 14 H7" stroke="#8c96d0" stroke-width="0.9"/><path d="M14.4 5 L16.6 7.2 L9.6 14.2 L6.8 15 L7.4 12 Z" fill="#7cc486" stroke="#3e9a4e" stroke-width="0.9"/></svg>
<!-- nav 14: shield -->
<svg style="left:9px;top:647px" width="16" height="18" viewBox="0 0 16 18"><path d="M8 1 C10 2.4 12.4 3 14.8 3 V8.6 C14.8 12.6 11.8 15.4 8 17 C4.2 15.4 1.2 12.6 1.2 8.6 V3 C3.6 3 6 2.4 8 1 Z" fill="#a8dcb0" stroke="#5ab86a" stroke-width="1"/><path d="M4.8 9 L7.2 11.2 L11.4 6.6" fill="none" stroke="#2f9a44" stroke-width="1.5"/></svg>
<!-- bottom strip icons -->
<svg style="left:80px;top:682px" width="100" height="4" viewBox="0 0 100 4"><path d="M3 4 V2.2 C3 1.6 3.4 1.2 4 1.2 H8 L9 2.4 H15 C15.6 2.4 16 2.8 16 3.4 V4 Z" fill="#e6a81e"/><path d="M35 4 C35 2.6 36 1.8 37.4 1.8 C38.8 1.8 39.8 2.6 39.8 4 Z" fill="#9a8f96"/><path d="M59.4 4 V3 C59.4 2 60.2 1.4 61.2 1.4 H66.6 C67.6 1.4 68.4 2 68.4 3 V4" fill="#fff" stroke="#4553a2" stroke-width="0.9"/><path d="M86 4 V2.6 H87.6 V4 M89.2 4 V2.6 H90.8 V4" fill="#111"/></svg>
<!-- watermark stamp -->
<svg style="left:1106px;top:606px;z-index:6;mix-blend-mode:multiply" width="80" height="70" viewBox="0 0 80 70"><g fill="none" stroke="#c9c9c9"><circle cx="40" cy="34" r="26.5" stroke-width="2.6"/><circle cx="40" cy="34" r="21" stroke-width="1.2"/><circle cx="40" cy="34" r="16" stroke-width="1" stroke-dasharray="3 2"/></g><g transform="rotate(-17 40 34)"><rect x="5" y="27.5" width="67" height="13.5" fill="#c9c9c9"/><text x="38.5" y="38.2" font-family="Liberation Sans, sans-serif" font-size="9.6" font-weight="bold" text-anchor="middle" fill="#f2f2f2" letter-spacing="0.1">DỮ LIỆU MẪU</text></g></svg>
<!-- chat widget -->
<div style="left:1142px;top:452px;width:50px;height:50px;background:#fff;z-index:7"></div>
<svg style="left:1142px;top:452px;z-index:8" width="52" height="52" viewBox="0 0 52 52"><circle cx="25" cy="25" r="24" fill="#2f97f6"/><ellipse cx="25.2" cy="25" rx="15" ry="13.2" fill="#fff"/><path d="M14.5 33 L11.6 40.4 L21 36.8 Z" fill="#fff"/><circle cx="17.6" cy="25.6" r="2.4" fill="#2f97f6"/><circle cx="25.2" cy="25.6" r="2.4" fill="#2f97f6"/><circle cx="32.8" cy="25.6" r="2.4" fill="#2f97f6"/><circle cx="41.6" cy="8.4" r="7" fill="#fff"/><path d="M38.4 5.2 L44.8 11.6 M44.8 5.2 L38.4 11.6" stroke="#222" stroke-width="1.5"/></svg>

<div class="bd" style="left:0;top:0;width:1197px;height:1px"></div>
<div class="bd" style="left:0;top:686px;width:1197px;height:1px"></div>
<div class="bd" style="left:0;top:0;width:1px;height:687px"></div>
<div class="bd" style="left:1196px;top:0;width:1px;height:687px"></div>
</div>
</body>
</html>
